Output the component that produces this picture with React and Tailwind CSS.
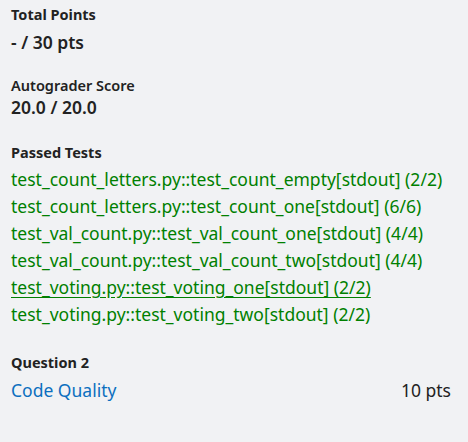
const tests = [
  "test_count_letters.py::test_count_empty[stdout] (2/2)",
  "test_count_letters.py::test_count_one[stdout] (6/6)",
  "test_val_count.py::test_val_count_one[stdout] (4/4)",
  "test_val_count.py::test_val_count_two[stdout] (4/4)",
  "test_voting.py::test_voting_one[stdout] (2/2)",
  "test_voting.py::test_voting_two[stdout] (2/2)",
];

export default function App() {
  return (
    <div
      className="h-[442px] w-[468px] bg-[#f1f2f4] px-[11px] pt-[4px] text-[#222]"
      style={{ fontFamily: '"Noto Sans", sans-serif' }}
    >
      <div className="text-[14.5px] font-bold leading-[20px]">Total Points</div>
      <div className="mt-[6px] text-[17.5px] font-semibold leading-[24px]">- / 30 pts</div>

      <div className="mt-[21px] text-[14.5px] font-semibold leading-[20px]">Autograder Score</div>
      <div className="text-[17.5px] font-semibold leading-[24px]">20.0 / 20.0</div>

      <div className="mt-[23px] text-[14.5px] font-bold leading-[20px]">Passed Tests</div>
      <ul className="mt-[4px] text-[17.5px] leading-[27px] text-[#008000]">
        {tests.map((t, i) => (
          <li key={t} className={i === 4 ? "underline underline-offset-[3px]" : ""}>
            {t}
          </li>
        ))}
      </ul>

      <div className="mt-[24px] text-[14.5px] font-bold leading-[20px]">Question 2</div>
      <div className="mt-[6px] flex items-center justify-between pr-[6px] text-[17.5px] leading-[24px]">
        <a className="text-[#0c6fbf]">Code Quality</a>
        <span>10 pts</span>
      </div>
    </div>
  );
}
